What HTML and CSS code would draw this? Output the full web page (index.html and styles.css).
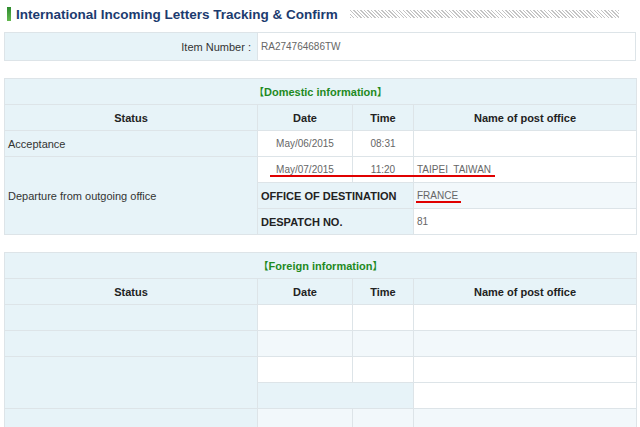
FILE: index.html
```html
<!DOCTYPE html>
<html lang="en">
<head>
    <meta charset="UTF-8">
    <title>International Incoming Letters Tracking &amp; Confirm</title>
    <link rel="stylesheet" href="styles.css">
</head>
<body>
<div class="page">
    <div class="title-bar">
        <span class="title-mark"></span>
        <h1>International Incoming Letters Tracking &amp; Confirm</h1>
        <span class="title-hatch"></span>
    </div>

    <table class="grid item-box">
        <colgroup><col class="c-status"><col></colgroup>
        <tr>
            <td class="label right">Item Number :</td>
            <td class="data">RA274764686TW</td>
        </tr>
    </table>

    <table class="grid">
        <colgroup>
            <col class="c-status"><col class="c-date"><col class="c-time"><col class="c-office">
        </colgroup>
        <tr><td class="caption" colspan="4"><span class="br">【</span>Domestic information<span class="br">】</span></td></tr>
        <tr class="head">
            <th>Status</th><th>Date</th><th>Time</th><th>Name of post office</th>
        </tr>
        <tr>
            <td class="label">Acceptance</td>
            <td class="data center">May/06/2015</td>
            <td class="data center">08:31</td>
            <td class="data"></td>
        </tr>
        <tr>
            <td class="label" rowspan="3">Departure from outgoing office</td>
            <td class="data center">May/07/2015</td>
            <td class="data center">11:20</td>
            <td class="data">TAIPEI&nbsp; TAIWAN</td>
        </tr>
        <tr>
            <td class="label strong" colspan="2">OFFICE OF DESTINATION</td>
            <td class="data alt">FRANCE</td>
        </tr>
        <tr>
            <td class="label strong" colspan="2">DESPATCH NO.</td>
            <td class="data">81</td>
        </tr>
    </table>

    <table class="grid">
        <colgroup>
            <col class="c-status"><col class="c-date"><col class="c-time"><col class="c-office">
        </colgroup>
        <tr><td class="caption" colspan="4"><span class="br">【</span>Foreign information<span class="br">】</span></td></tr>
        <tr class="head">
            <th>Status</th><th>Date</th><th>Time</th><th>Name of post office</th>
        </tr>
        <tr>
            <td class="label"></td><td class="data"></td><td class="data"></td><td class="data"></td>
        </tr>
        <tr>
            <td class="label"></td><td class="data alt"></td><td class="data alt"></td><td class="data alt"></td>
        </tr>
        <tr>
            <td class="label" rowspan="2"></td><td class="data"></td><td class="data"></td><td class="data"></td>
        </tr>
        <tr>
            <td class="label" colspan="2"></td><td class="data"></td>
        </tr>
        <tr>
            <td class="label"></td><td class="data alt"></td><td class="data alt"></td><td class="data alt"></td>
        </tr>
        <tr>
            <td class="label"></td><td class="data"></td><td class="data"></td><td class="data"></td>
        </tr>
    </table>

    <span class="mark mark-departure"></span>
    <span class="mark mark-france"></span>
</div>
</body>
</html>
```

FILE: styles.css
```css
body {
    margin: 0;
    background: #fff;
    font-family: "Liberation Sans", Arial, sans-serif;
    font-size: 11px;
    color: #333;
}
.page {
    position: relative;
    padding: 0 4px;
}
.title-bar {
    display: flex;
    align-items: center;
    height: 28px;
    padding: 0 3px;
}
.title-mark {
    width: 4px;
    height: 14px;
    margin-right: 5px;
    background: linear-gradient(#2e8b2e, #63b84f);
}
h1 {
    margin: 0;
    font-size: 13.5px;
    font-weight: bold;
    color: #1c3b6f;
    white-space: nowrap;
}
.title-hatch {
    flex: 1;
    height: 8px;
    margin: 0 14px 0 12px;
    background: repeating-linear-gradient(45deg, #c4c4c4 0, #c4c4c4 1px, #fff 1px, #fff 2.5px);
}
.grid {
    width: 632px;
    table-layout: fixed;
    border-collapse: collapse;
    border: 1px solid #cfe9cf;
    margin-top: 17px;
}
.item-box {
    margin-top: 4px;
}
.c-status { width: 253px; }
.c-date { width: 95px; }
.c-time { width: 61px; }
.c-office { width: 223px; }
td, th {
    height: 25px;
    padding: 0 3px;
    border: 1px solid #dde4e8;
    white-space: nowrap;
}
.item-box td {
    height: 27px;
}
.caption {
    background: #e7f3f8;
    text-align: center;
    color: #1f8a1f;
    font-weight: bold;
}
.br {
    font-family: "Noto Sans CJK SC", sans-serif;
    font-size: 10px;
}
.head th {
    background: #e7f3f8;
    color: #222;
    font-size: 11px;
}
.label {
    background: #e7f3f8;
    color: #333;
}
.right { text-align: right; padding-right: 6px; }
.strong { font-weight: bold; color: #222; }
.data {
    background: #fff;
    color: #666;
    font-size: 10px;
}
.alt { background: #f2f8fb; }
.center { text-align: center; }
.mark {
    position: absolute;
    height: 2px;
    background: #e00000;
}
.mark-departure {
    left: 270px;
    top: 175px;
    width: 225px;
}
.mark-france {
    left: 416px;
    top: 201px;
    width: 45px;
}
```
